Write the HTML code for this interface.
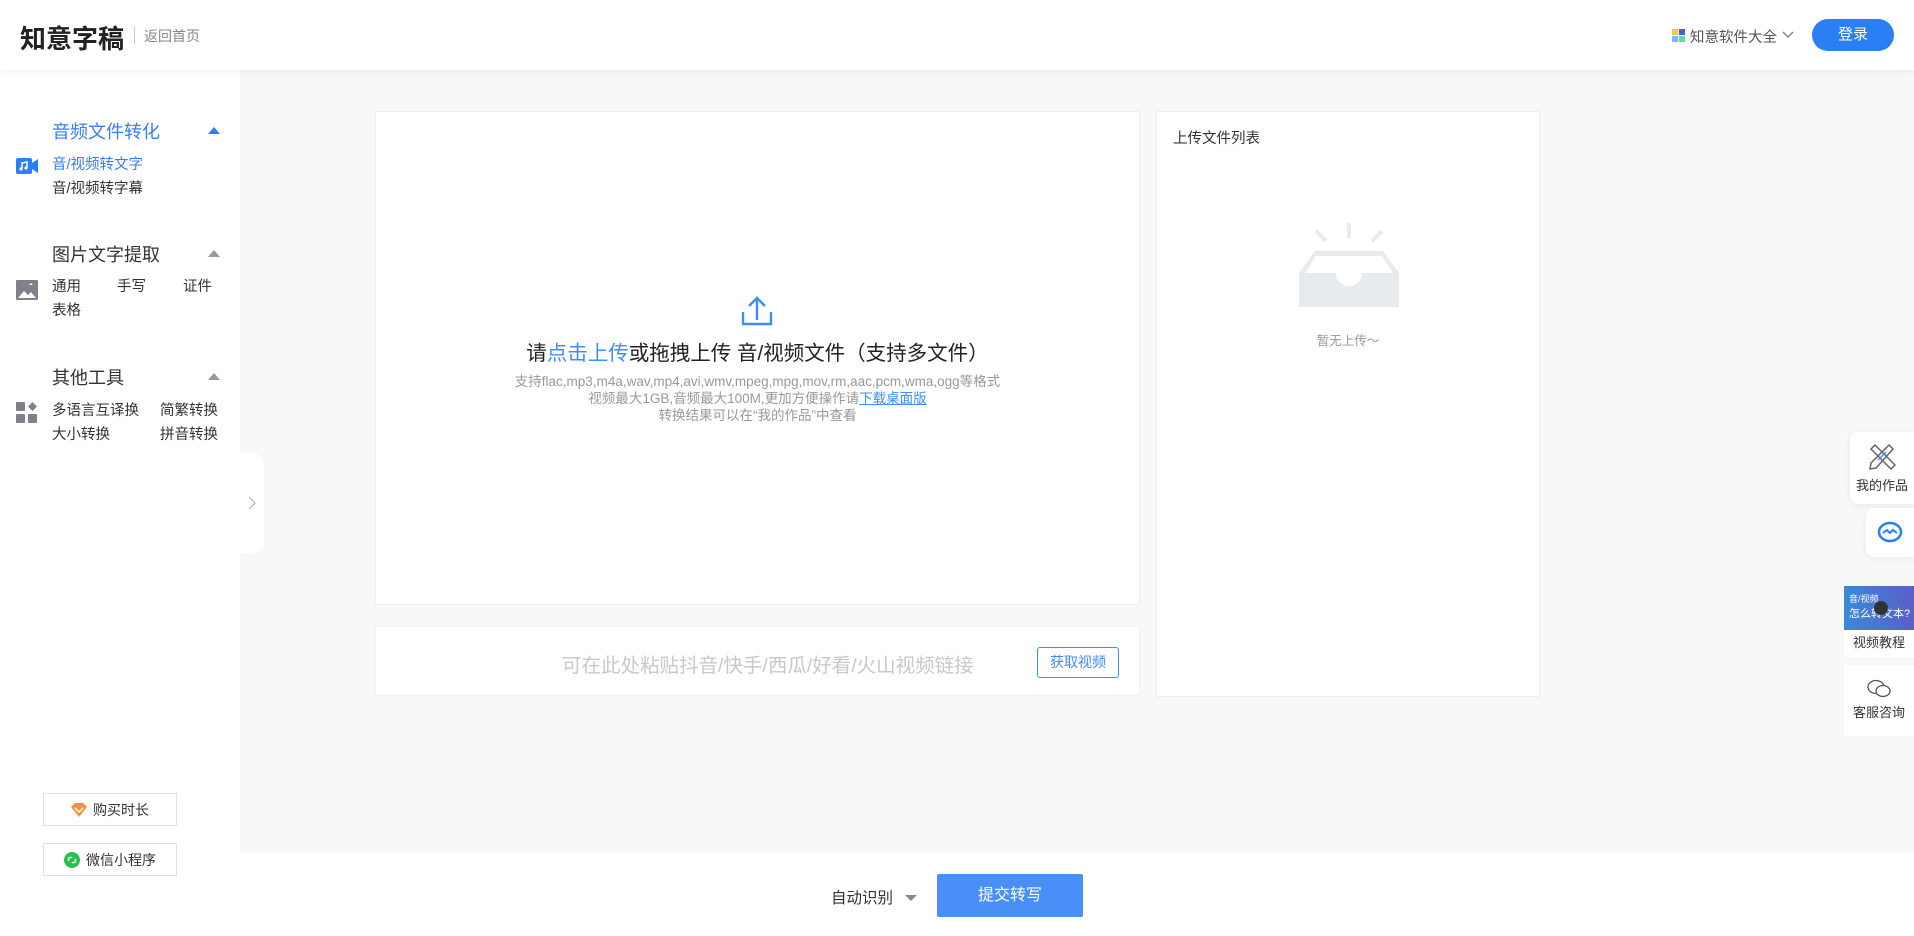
<!DOCTYPE html>
<html><head><meta charset="utf-8"><style>
*{margin:0;padding:0;box-sizing:border-box}
body{width:1914px;height:936px;overflow:hidden;background:#f8f8f8;font-family:"Liberation Sans","Noto Sans CJK SC",sans-serif;position:relative;color:#333}
.a{position:absolute;white-space:nowrap}
.hdr{left:0;top:0;width:1914px;height:70px;background:#fff;box-shadow:0 2px 8px rgba(0,0,0,.05);z-index:2}
.side{left:0;top:70px;width:240px;height:866px;background:#fff}
.card{background:#fff;border:1px solid #eee}
.sec{font-size:18px;color:#333}
.it{font-size:14.5px;color:#333}
.tri{width:0;height:0;border-left:6px solid transparent;border-right:6px solid transparent;border-bottom:7px solid #999}
.btn2{border:1px solid #dde3ee;background:#fff;font-size:14px;color:#333;display:flex;align-items:center;justify-content:center;gap:6px}
.fl{background:#fff;border-radius:8px 0 0 8px;box-shadow:0 2px 8px rgba(0,0,0,.06);font-size:13px;color:#333;text-align:center}
</style></head><body>
<div class="a hdr">
 <div class="a" style="left:20px;top:19px;font-size:26px;font-weight:bold;color:#222">知意字稿</div>
 <div class="a" style="left:134px;top:26px;width:1px;height:18px;background:#ccc"></div>
 <div class="a" style="left:144px;top:26px;font-size:14px;color:#888">返回首页</div>
 <div class="a" style="left:1672px;top:29px;width:6px;height:6px;background:#f7c948"></div>
 <div class="a" style="left:1679px;top:29px;width:6px;height:6px;background:#4a63c8"></div>
 <div class="a" style="left:1672px;top:36px;width:6px;height:6px;background:#6ec0f5"></div>
 <div class="a" style="left:1679px;top:36px;width:6px;height:6px;background:#5dd8a8"></div>
 <div class="a" style="left:1690px;top:26px;font-size:14.5px;color:#555">知意软件大全</div>
 <svg class="a" style="left:1782px;top:31px" width="12" height="8"><path d="M1 1l5 5 5-5" stroke="#777" fill="none" stroke-width="1.3"/></svg>
 <div class="a" style="left:1812px;top:19px;width:82px;height:32px;border-radius:16px;background:#2a7ff5;color:#fff;font-size:15px;text-align:center;line-height:32px">登录</div>
</div>
<div class="a side">
 <div class="a sec" style="left:52px;top:48px;color:#3c7cf5">音频文件转化</div>
 <div class="a tri" style="left:208px;top:57px;border-bottom-color:#2a7ff5"></div>
 <svg class="a" style="left:16px;top:88px" width="22" height="16"><rect x="0" y="0" width="16" height="16" rx="2" fill="#2a7ff5"/><path d="M16 5l6-4v14l-6-4z" fill="#2a7ff5"/><path d="M6 11V5l5-1v6" stroke="#fff" stroke-width="1.5" fill="none"/><circle cx="5" cy="11" r="1.6" fill="#fff"/><circle cx="10" cy="10" r="1.6" fill="#fff"/></svg>
 <div class="a it" style="left:52px;top:83px;color:#3c7cf5">音/视频转文字</div>
 <div class="a it" style="left:52px;top:107px">音/视频转字幕</div>
 <div class="a sec" style="left:52px;top:171px">图片文字提取</div>
 <div class="a tri" style="left:208px;top:180px"></div>
 <svg class="a" style="left:16px;top:210px" width="22" height="20"><rect width="22" height="20" rx="1" fill="#80808a"/><path d="M2 18l6-7 4 4 3-3 5 6z" fill="#fff"/><path d="M13 5l2-2 2 2z" fill="#fff"/></svg>
 <div class="a it" style="left:52px;top:205px">通用</div>
 <div class="a it" style="left:117px;top:205px">手写</div>
 <div class="a it" style="left:183px;top:205px">证件</div>
 <div class="a it" style="left:52px;top:229px">表格</div>
 <div class="a sec" style="left:52px;top:294px">其他工具</div>
 <div class="a tri" style="left:208px;top:303px"></div>
 <svg class="a" style="left:16px;top:332px" width="22" height="22"><rect width="9" height="9" rx="1" fill="#80808a"/><rect x="0" y="12" width="9" height="9" rx="1" fill="#80808a"/><rect x="12" y="12" width="9" height="9" rx="1" fill="#80808a"/><path d="M16.5 0l4.5 4.5-4.5 4.5-4.5-4.5z" fill="#80808a"/></svg>
 <div class="a it" style="left:52px;top:329px">多语言互译换</div>
 <div class="a it" style="left:160px;top:329px">简繁转换</div>
 <div class="a it" style="left:52px;top:353px">大小转换</div>
 <div class="a it" style="left:160px;top:353px">拼音转换</div>
 <div class="a btn2" style="left:43px;top:723px;width:134px;height:33px"><svg width="16" height="14"><path d="M0 4l4-4h8l4 4-8 10z" fill="#f5923e"/><path d="M4 5l4 4 4-4" stroke="#fff" stroke-width="1.5" fill="none"/></svg>购买时长</div>
 <div class="a btn2" style="left:43px;top:773px;width:134px;height:33px"><svg width="16" height="16"><circle cx="8" cy="8" r="8" fill="#27c24c"/><path d="M5 9a2 2 0 0 1 3-3M11 7a2 2 0 0 1-3 3" stroke="#fff" stroke-width="1.5" fill="none"/></svg>微信小程序</div>
</div>
<div class="a" style="left:240px;top:453px;width:24px;height:100px;background:#fff;border-radius:0 12px 12px 0"></div>
<svg class="a" style="left:248px;top:496px" width="8" height="14"><path d="M1 1l6 6-6 6" stroke="#aaa" fill="none"/></svg>

<div class="a card" style="left:375px;top:111px;width:765px;height:494px">
 <svg class="a" style="left:365px;top:184px" width="32" height="30"><path d="M16 24V2M8 10l8-8 8 8M2 16v12h28V16" stroke="#3f8cff" stroke-width="2.4" fill="none"/></svg>
 <div class="a" style="left:0;width:763px;top:224px;text-align:center;font-size:20.5px;color:#222">请<span style="color:#3f8cff">点击上传</span>或拖拽上传 音/视频文件（支持多文件）</div>
 <div class="a" style="left:0;width:763px;top:261px;text-align:center;font-size:13.5px;line-height:17px;color:#999">支持flac,mp3,m4a,wav,mp4,avi,wmv,mpeg,mpg,mov,rm,aac,pcm,wma,ogg等格式<br>视频最大1GB,音频最大100M,更加方便操作请<span style="color:#3f8cff;text-decoration:underline">下载桌面版</span><br>转换结果可以在“我的作品”中查看</div>
</div>
<div class="a card" style="left:375px;top:626px;width:765px;height:70px;border-color:#f2f2f2">
 <div class="a" style="left:186px;top:22px;font-size:19.5px;color:#c8c8c8">可在此处粘贴抖音/快手/西瓜/好看/火山视频链接</div>
 <div class="a" style="left:661px;top:20px;width:82px;height:31px;border:1px solid #3f8cff;border-radius:3px;color:#3f8cff;font-size:14px;text-align:center;line-height:29px">获取视频</div>
</div>
<div class="a card" style="left:1156px;top:111px;width:384px;height:586px">
 <div class="a" style="left:16px;top:15px;font-size:14.5px;color:#333">上传文件列表</div>
 <svg class="a" style="left:141px;top:111px" width="102" height="86"><path d="M18 8l10 10M51 0v15M84 8l-10 10" stroke="#e8ebee" stroke-width="4"/><path d="M17 28h68l16 22v34H1V50z" fill="#e8ebee"/><path d="M18 33h66l11 17H7z" fill="#fff"/><path d="M38 50a13 13 0 0 0 26 0z" fill="#fff"/></svg>
 <div class="a" style="left:0;width:382px;top:218px;text-align:center;font-size:12.5px;color:#999">暂无上传～</div>
</div>

<div class="a fl" style="left:1850px;top:432px;width:64px;height:72px">
 <svg style="margin-top:12px" width="28" height="26"><path d="M3 5l4-4 20 20-4 4zM25 5l-4-4L3 19l-1 6 6-1z" stroke="#666" stroke-width="1.5" fill="#fff"/><path d="M10 16l8-8" stroke="#3f8cff" stroke-width="1.5"/></svg>
 <div style="margin-top:2px">我的作品</div>
</div>
<div class="a fl" style="left:1866px;top:508px;width:48px;height:49px">
 <svg style="margin-top:13px" width="26" height="22"><ellipse cx="13" cy="11" rx="11" ry="9" stroke="#2a7ff5" stroke-width="2.5" fill="none"/><path d="M6 12l4-3 3 3 3-3 4 3" stroke="#2a7ff5" stroke-width="2" fill="none"/></svg>
</div>
<div class="a" style="left:1844px;top:586px;width:70px;height:71px;background:#fff">
 <div style="height:44px;background:linear-gradient(90deg,#3b8ad6,#5a5fc8);color:#fff;font-size:9px;padding:6px 5px;position:relative">音/视频<br><span style="font-size:11px">怎么转文本?</span><div style="position:absolute;left:30px;top:15px;width:14px;height:14px;border-radius:7px;background:#333"></div></div>
 <div style="text-align:center;font-size:13px;line-height:26px;color:#333">视频教程</div>
</div>
<div class="a" style="left:1844px;top:665px;width:70px;height:71px;background:#fff;text-align:center;font-size:13px;color:#333">
 <svg style="margin-top:14px" width="24" height="20"><ellipse cx="9" cy="8" rx="8" ry="6.5" stroke="#555" stroke-width="1.3" fill="#fff"/><ellipse cx="16" cy="12" rx="7" ry="5.5" stroke="#555" stroke-width="1.3" fill="#fff"/></svg>
 <div>客服咨询</div>
</div>

<div class="a" style="left:240px;top:853px;width:1674px;height:83px;background:#fff">
 <div class="a" style="left:591px;top:33px;font-size:15.5px;color:#333">自动识别</div>
 <div class="a" style="left:665px;top:42px;width:0;height:0;border-left:6px solid transparent;border-right:6px solid transparent;border-top:6px solid #888"></div>
 <div class="a" style="left:697px;top:21px;width:146px;height:43px;background:#4a8ff8;color:#fff;font-size:16px;text-align:center;line-height:43px;border-radius:2px">提交转写</div>
</div>
</body></html>
